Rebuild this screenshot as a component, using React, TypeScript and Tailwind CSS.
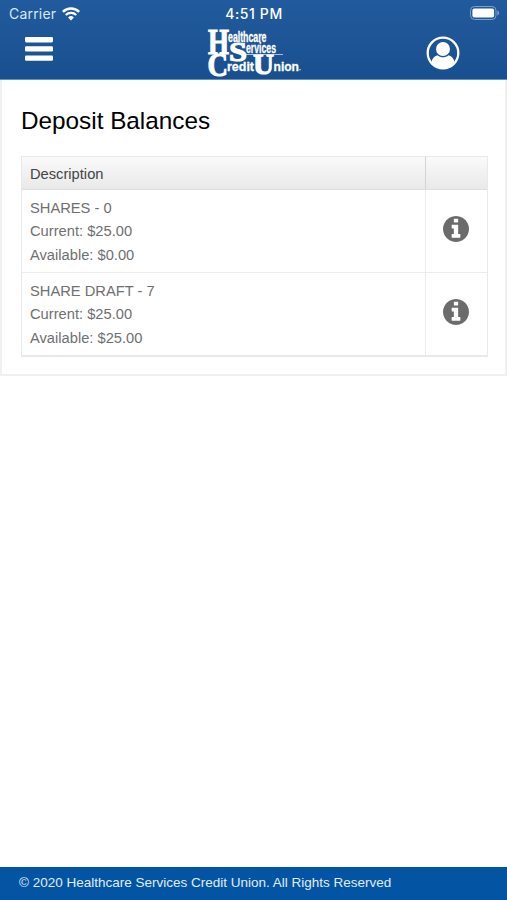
const accounts = [
	{ name: "SHARES - 0", current: "$25.00", available: "$0.00" },
	{ name: "SHARE DRAFT - 7", current: "$25.00", available: "$25.00" },
];

function WifiIcon() {
	return (
		<svg viewBox="0 0 18 14" className="w-[18px] h-[14px]" fill="none">
			<path d="M0.9 4.900a11.600 11.600 0 0 1 16.200 0" stroke="#fff" strokeWidth="2.500" />
			<path d="M3.800 8a7.500 7.500 0 0 1 10.400 0" stroke="#fff" strokeWidth="2.300" />
			<path d="M6.100 10.500a4.100 4.100 0 0 1 5.800 0L9 13.500z" fill="#fff" />
		</svg>
	);
}

function BatteryIcon() {
	return (
		<svg viewBox="0 0 30 14" className="w-[30px] h-[14px]">
			<rect x="0.5" y="0.5" width="25.500" height="13" rx="4" fill="none" stroke="#7f9fc8" />
			<rect x="2.400" y="2.400" width="21.700" height="9.200" rx="2" fill="#fff" />
			<path d="M27.300 4.600v4.800c1.100-.4 1.800-1.300 1.800-2.400s-.7-2-1.800-2.400z" fill="#7f9fc8" />
		</svg>
	);
}

function MenuIcon() {
	return (
		<svg viewBox="0 0 28 24" className="w-7 h-6" fill="#fff">
			<rect width="28" height="5.400" rx="1.300" />
			<rect y="9.200" width="28" height="5.400" rx="1.300" />
			<rect y="18.400" width="28" height="5.400" rx="1.300" />
		</svg>
	);
}

function Logo() {
	return (
		<svg viewBox="0 0 96 50" className="w-24 h-[50px] overflow-visible" fill="#fff">
			<g className="font-['Liberation_Serif',serif] font-bold" stroke="#fff" strokeWidth="1.100">
				<text x="2" y="26" fontSize="35" textLength="21" lengthAdjust="spacingAndGlyphs">H</text>
				<text x="23" y="32.500" fontSize="27" textLength="18" lengthAdjust="spacingAndGlyphs">S</text>
				<text x="1.500" y="48" fontSize="33" textLength="20.500" lengthAdjust="spacingAndGlyphs">C</text>
				<text x="47" y="46" fontSize="30" textLength="21" lengthAdjust="spacingAndGlyphs">U</text>
			</g>
			<g className="font-['Liberation_Sans',sans-serif] font-bold" stroke="#fff" strokeWidth="0.3">
				<text x="22" y="14" fontSize="14" textLength="38.500" lengthAdjust="spacingAndGlyphs">ealthcare</text>
				<text x="40" y="24.500" fontSize="14" textLength="30" lengthAdjust="spacingAndGlyphs">ervices</text>
				<text x="21" y="42.500" fontSize="13.500" textLength="27" lengthAdjust="spacingAndGlyphs">redit</text>
				<text x="67.500" y="42.500" fontSize="13.500" textLength="25.500" lengthAdjust="spacingAndGlyphs">nion</text>
			</g>
			<rect x="40" y="26" width="37" height="0.900" opacity="0.7" />
			<circle cx="94" cy="41.700" r="0.700" />
		</svg>
	);
}

function UserIcon() {
	return (
		<svg viewBox="0 0 34 34" className="w-[34px] h-[34px]" fill="#fff">
			<circle cx="17" cy="17" r="15.300" fill="none" stroke="#fff" strokeWidth="2.300" />
			<circle cx="17" cy="13" r="7" />
			<path d="M5.500 26.500c.3-3.600 2.500-6.300 6-7.300 3.200 2.700 7.800 2.700 11 0 3.500 1 5.700 3.700 6 7.300-2.500 3.700-6.800 6-11.500 6s-9-2.300-11.500-6z" />
		</svg>
	);
}

function InfoIcon() {
	return (
		<svg viewBox="0 128 1536 1536" className="w-[26px] h-[26px]" fill="#6b6b6b">
			<path d="M1024 1376v-160q0-14-9-23t-23-9h-96v-512q0-14-9-23t-23-9h-320q-14 0-23 9t-9 23v160q0 14 9 23t23 9h96v320h-96q-14 0-23 9t-9 23v160q0 14 9 23t23 9h448q14 0 23-9t9-23zm-128-896v-160q0-14-9-23t-23-9h-192q-14 0-23 9t-9 23v160q0 14 9 23t23 9h192q14 0 23-9t9-23zm640 416q0 209-103 385.500t-279.500 279.500-385.500 103-385.500-103-279.500-279.500-103-385.500 103-385.500 279.500-279.500 385.500-103 385.500 103 279.500 279.500 103 385.500z" />
		</svg>
	);
}

export default function App() {
	return (
		<div className="flex flex-col h-screen bg-white font-['Liberation_Sans',Arial,sans-serif]">
			<header className="h-20 shrink-0 bg-gradient-to-b from-[#225b9d] to-[#184f8f] border-b border-[#5f92c4]">
				<div className="grid grid-cols-3 items-center h-7 pl-[9px] pr-[7px] text-white font-['Inter',sans-serif]">
					<div className="flex items-center gap-1.5">
						<span className="text-[14px] leading-5 tracking-[0.2px] text-[#d9e6f5]">Carrier</span>
						<WifiIcon />
					</div>
					<span className="text-center text-[14px] leading-5 font-medium tracking-[0.600px] -mt-px -ml-px">4:51 PM</span>
					<div className="flex justify-end -mt-0.5">
						<BatteryIcon />
					</div>
				</div>
				<div className="grid grid-cols-3 items-center h-[50px] pl-[25px] pr-[47px]">
					<button aria-label="Menu" className="-mt-2">
						<MenuIcon />
					</button>
					<div className="flex justify-center pl-[22px]">
						<Logo />
					</div>
					<button aria-label="Profile" className="flex justify-end">
						<UserIcon />
					</button>
				</div>
			</header>

			<main className="flex-1">
				<section className="h-[296px] pl-[19px] pr-[17px] pt-[25px] border-x-2 border-b-2 border-[#f0f0f0]">
					<h1 className="text-[24.300px] leading-8 text-black">Deposit Balances</h1>
					<div className="mt-[19px] border border-b-2 border-[#e9e9e9] text-[14.700px]">
						<div className="flex h-[33px] bg-gradient-to-b from-[#fafafa] to-[#e9e9e9] border-b border-[#dedede]">
							<div className="flex-1 flex items-center pl-2 pt-0.5 text-[#444]">Description</div>
							<div className="w-[62px] border-l border-[#d4d4d4]" />
						</div>
						{accounts.map((account) => (
							<div key={account.name} className="flex h-[83px] border-b border-[#ececec] last:h-[82px] last:border-b-0">
								<div className="flex-1 pl-2 pt-[7px] leading-[23.300px] text-[#707070]">
									<p>{account.name}</p>
									<p>Current: {account.current}</p>
									<p>Available: {account.available}</p>
								</div>
								<div className="w-[62px] flex items-center justify-center pb-1 pr-0.5 border-l border-[#ececec]">
									<InfoIcon />
								</div>
							</div>
						))}
					</div>
				</section>
			</main>

			<footer className="h-[33px] shrink-0 flex items-center pl-[19px] pb-px bg-[#0355a4] text-[13.500px] text-[#e0ecf8]">
				© 2020 Healthcare Services Credit Union. All Rights Reserved
			</footer>
		</div>
	);
}
